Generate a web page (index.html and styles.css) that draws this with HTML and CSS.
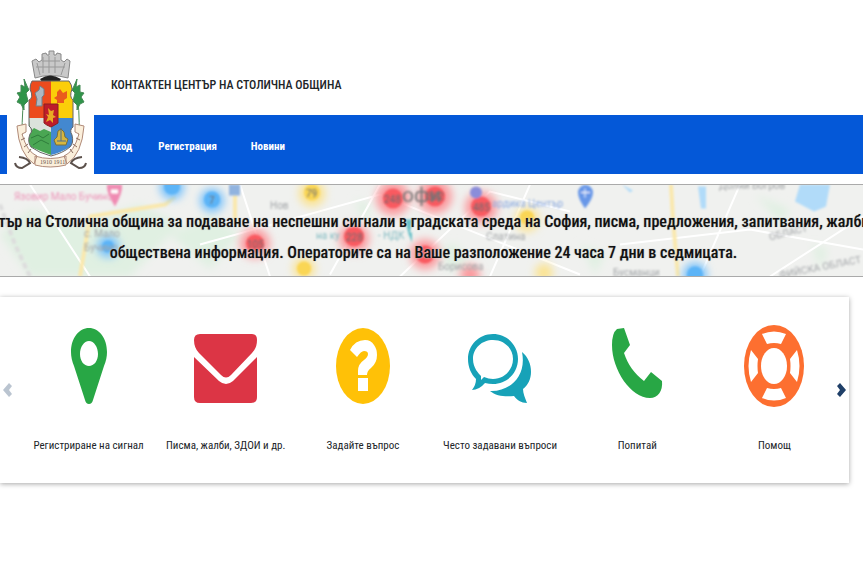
FILE: index.html
```
<!DOCTYPE html>
<html lang="bg">
<head>
  <meta charset="UTF-8">
  <meta name="viewport" content="width=device-width, initial-scale=1.0">
  <title>Контактен център на Столична община</title>
  <link rel="stylesheet" href="styles.css">
</head>
<body>
  <header class="header">
    <a class="logo" href="#" aria-label="Столична община">
      <svg viewBox="0 0 87 126" width="87" height="126">
        <!-- crown -->
        <path d="M25 13l4-2 3 3 3-2V6l4-1 1 2 2 0V3h5v4l2 0 1-2 4 1v6l3 2 3-3 3 2-2 17q-18-5-33 0z" fill="#c9c9c9" stroke="#888" stroke-width="1"/>
        <path d="M36 9v16M42 8v17M48 9v16M30 15l3 12M58 15l-4 12M29 19h29M35 13h18" stroke="#999" fill="none"/>
        <path d="M33 31q10-7 21 0l-2 3H35z" fill="#222"/>
        <!-- olive branches -->
        <path d="M18 41q-3 20-3 46M69 41q4 20 3 46" stroke="#4b8a56" stroke-width="1" fill="none"/>
        <path d="M17 31l3 7 2 4-3 3 2 8-4 4 0 5-3-6-4-2 3-5-3-4 4-1 0-7 4 2zM70 31l-3 7-2 4 3 3-2 8 4 4 0 5 3-6 4-2-3-5 3-4-4-1 0-7-4 2z" fill="#2f9449" stroke="#458a55"/>
        <!-- shield -->
        <path d="M25 33h19v37H22V52q5-2 1-11 0-5 2-8z" fill="#ec4b1e"/>
        <path d="M44 33h18q3 4 3 8-3 8 1 11v18H44z" fill="#fbce09"/>
        <path d="M22 70h22v37q-11-4-20-8-4-5-1-13 4-4-1-8z" fill="#4aa653"/>
        <path d="M44 70h22v9q-4 3-1 8 2 8-2 12-8 5-19 8z" fill="#4388d0"/>
        <path d="M22 70h22v14l-7-3-4 2-6-3-4 4z" fill="#dce2dc"/>
        <path d="M24 90l7-3 5 3 6-4M26 97l8-5 8 4" stroke="#2f7d3b" fill="none"/>
        <path d="M25 33h37q3 4 3 8-3 8 1 11v27q-4 3-1 8 2 8-2 12-7 6-19 9-12-3-20-9-4-5-1-13 4-4-1-8V52q5-2 1-11 0-5 2-8z" fill="none" stroke="#666"/>
        <path d="M33 38l4 3v6l-2 2v9h-6l1-7-2-6 4-3z" fill="#aeb9c2" stroke="#727f89"/>
        <path d="M53 41l3 4 4-2 0 7-3 2v3h-7v-3l-3-2 3-2v-4z" fill="#ea5a1c"/>
        <path d="M47 92l3-3 1-6 3-2 3 3 1 5 3 2-2 6H49z" fill="#d6b63f" stroke="#78703c"/>
        <path d="M50 93h9M54 80v13" stroke="#496c91"/>
        <path d="M37 56h14v19q-3 2-7 4-5-2-7-4z" fill="#be1c2b" stroke="#8c211f"/>
        <path d="M41 60l3 3 3-1-1 5 3 2-3 1v5l-3-3-4 2 2-5-2-3 3 1z" fill="#e8aa24"/>
        <!-- ribbon -->
        <path d="M10 78l9-2v8l-4 2q5 18 15 22l-3 8Q12 106 10 78zM77 78l-9-2v8l4 2q-5 18-15 22l3 8q15-10 17-38zM28 108q15 5 31 0v9q-16 4-31 0z" fill="#fbefdb" stroke="#b08a78"/>
        <path d="M14 92l4-2M17 99l4-3M21 105l3-4M73 92l-4-2M70 99l-4-3M66 105l-3-4" stroke="#8a6c60"/>
        <path d="M12 109q9 1 11 6l-8 5q-6 0-7-5M75 109q-9 1-11 6l8 5q6 0 7-5" fill="none" stroke="#5c514c" stroke-width="2"/>
        <text x="33" y="116" font-size="6" font-family="Liberation Serif, serif" fill="#68554b">1910 1911</text>
      </svg>
    </a>
    <h1 class="title">Контактен център на Столична община</h1>
    <nav class="nav">
      <a href="#">Вход</a>
      <a href="#">Регистрация</a>
      <a href="#">Новини</a>
    </nav>
  </header>

  <section class="banner">
    <svg class="map" viewBox="0 0 863 92" preserveAspectRatio="xMidYMid slice" aria-hidden="true">
      <defs>
        <filter id="soft"><feGaussianBlur stdDeviation="1"/></filter>
        <filter id="glow" x="-50%" y="-50%" width="200%" height="200%"><feGaussianBlur stdDeviation="4"/></filter>
      </defs>
      <rect width="863" height="92" fill="#f0f1ef"/>
      <g filter="url(#glow)" fill="#e0f0e2">
        <path d="M0 50l30-25 50 15 60-20 40 20-50 52H30zM170 50l40-20 30 20-30 35zM355 15l15 5-5 20zM440 65l15-6 15 20-20 8zM755 10l35 15-10 12zM812 60l16 5-8 20zM580 60l25 10-10 20z"/>
      </g>
      <g fill="none" stroke="#fff" stroke-width="2">
        <path d="M30 0l60 92M240 0l30 92M200 60l180-50 200 80M330 90l50-90M400 92l90-85 80 20M620 60l130-15 113 20M700 92l40-92M530 0l-40 92M770 92l93-60"/>
      </g>
      <path d="M0 20l15 40 15 32" fill="none" stroke="#ddd" stroke-width="4" stroke-dasharray="6 3" filter="url(#soft)"/>
      <g fill="none" stroke="#fae8ad" stroke-width="4" filter="url(#soft)">
        <path d="M80 92l10-60 75-12 10-8M235 10v30M671 0l2 35 5 57"/>
      </g>
      <g fill="#b1dbf9" filter="url(#soft)">
        <path d="M800 0h30l-4 22-12 5-19-10zM698 2h8v22h-5zM622 0l11 6-3 2z"/>
      </g>
      <g filter="url(#glow)">
        <g fill="#7cc3fb"><circle cx="172" cy="3" r="12"/><circle cx="212" cy="16" r="12"/><circle cx="108" cy="62" r="11"/><circle cx="695" cy="90" r="12"/></g>
        <g fill="#fb9a9e"><circle cx="255" cy="59" r="15"/><circle cx="393" cy="14" r="17"/><circle cx="435" cy="12" r="17"/><circle cx="481" cy="23" r="16"/><circle cx="354" cy="54" r="15"/><circle cx="425" cy="70" r="15"/><circle cx="470" cy="90" r="10"/></g>
        <g fill="#fbe391"><circle cx="312" cy="9" r="13"/><circle cx="304" cy="84" r="11"/><circle cx="527" cy="35" r="12"/><circle cx="544" cy="88" r="9"/></g>
      </g>
      <g filter="url(#soft)">
        <g fill="#5cb4f7"><circle cx="172" cy="2" r="8"/><circle cx="212" cy="15" r="8"/><circle cx="108" cy="62" r="6"/><circle cx="695" cy="90" r="8"/></g>
        <g fill="#f95a60"><circle cx="255" cy="59" r="9"/><circle cx="393" cy="14" r="10"/><circle cx="435" cy="12" r="10"/><circle cx="481" cy="22" r="10"/><circle cx="354" cy="52" r="10"/><circle cx="425" cy="70" r="9"/></g>
        <g fill="#fad654"><circle cx="312" cy="8" r="8"/><circle cx="304" cy="84" r="7"/><circle cx="527" cy="33" r="7"/></g>
        <path d="M107 0h15q1 8-7 22-9-14-8-22z" fill="#f08bb2"/><path d="M111 5h7v4h-7z" fill="#fff"/>
        <path d="M578 8a7 7 0 0 1 15 0q0 6-8 16-7-10-7-16z" fill="#6797e8"/><path d="M585 4v9M581 8h9" stroke="#fff"/>
        <path d="M229 0h11v11h-11z" fill="#91b3df"/><circle cx="476" cy="8" r="6" fill="#8b8dda"/>
        <path d="M405 35h8l-4 16zM408 48h4v10z" fill="#66bfc7"/>
      </g>
      <g class="map-labels" filter="url(#soft)">
        <text x="14" y="15" fill="#ed94b8">Язовир Мало Бучино</text>
        <text x="84" y="52">с. Мало</text><text x="84" y="66">Бучино</text>
        <text x="270" y="24">Нов</text>
        <text class="city" x="402" y="17">офи</text>
        <text x="492" y="22" fill="#8eace1">ардика Център</text>
        <text x="316" y="54" fill="#80bac1">на ку</text><text x="378" y="54" fill="#80bac1">- НДК</text>
        <text x="486" y="55">Слатина</text><text x="438" y="85">Борисова</text>
        <text x="719" y="4">Долни Богров</text>
        <text x="770" y="56" transform="rotate(-14 770 56)">ОБЛАСТ</text>
        <text x="613" y="91">Бусманци</text><text x="780" y="94" transform="rotate(-11 780 94)">ФИЙСКА ОБЛАСТ</text>
        <g fill="#6b6b70">
          <text x="306" y="12">79</text><text x="209" y="19">7</text><text x="384" y="18">248</text><text x="427" y="15">362</text><text x="473" y="26">485</text><text x="346" y="56">228</text><text x="247" y="63">105</text>
        </g>
      </g>
    </svg>
    <p class="banner-text">
      <span>център на Столична община за подаване на неспешни сигнали в градската среда на София, писма, предложения, запитвания, жалби,</span>
      <span>обществена информация. Операторите са на Ваше разположение 24 часа 7 дни в седмицата.</span>
    </p>
  </section>

  <main class="carousel">
    <button class="arrow prev" type="button" aria-label="Назад" disabled>
      <svg viewBox="0 0 10 16" width="10" height="16"><path d="M0 8l6-7 3 3-3 4 3 4-3 3z" fill="currentColor"/></svg>
    </button>
    <div class="items">
      <a class="item" href="#">
        <svg viewBox="0 0 60 84"><path fill="#28a745" fill-rule="evenodd" d="M30 4c10 0 18 10 18 24 0 5-1 9-3 14L34 76q-1 4-4 4t-4-4L15 42c-2-5-3-9-3-14C12 14 20 4 30 4zm0 13c-5 0-9 6-9 13s4 12 9 12 9-5 9-12-4-13-9-13z"/></svg>
        <span>Регистриране на сигнал</span>
      </a>
      <a class="item" href="#">
        <svg class="wide" viewBox="0 0 64 84"><path fill="#dc3545" d="M6 10h52q5 0 5 6 0 8-5 13L37 51q-5 5-10 0L5 29Q0 24 0 16q0-6 6-6zM0 33l25 24q7 6 14 0l24-24v40q0 6-6 6H6q-6 0-6-6z"/></svg>
        <span>Писма, жалби, ЗДОИ и др.</span>
      </a>
      <a class="item" href="#">
        <svg viewBox="0 0 60 84"><ellipse cx="30" cy="42" rx="27" ry="38" fill="#ffc107"/><path fill="#fff" d="M17 26q5-10 15-10 6 0 9 5 3 4 3 10 0 8-6 13-4 3-4 7H25v-4q0-7 6-11 4-3 4-6 0-3-4-3-3 0-7 6zM25 54h10v13H25z"/></svg>
        <span>Задайте въпрос</span>
      </a>
      <a class="item" href="#">
        <svg class="wide" viewBox="0 0 64 84"><g fill="#17a2b8"><path fill-rule="evenodd" d="M25 10c14 0 25 11 25 25S39 60 25 60q-4 0-8-1-6 7-13 7 4-5 4-11C3 50 0 43 0 35c0-14 11-25 25-25zm0 6C14 16 5 24 5 35c0 9 6 15 8 17v4l3-3c3 1 6 2 9 2 11 0 20-9 20-20s-9-19-20-19z"/><path d="M54 28c6 5 9 12 9 20 0 7-3 13-8 17 0 4 2 9 4 14-6 0-10-3-13-7-9 1-18 0-24-5 19 1 37-14 32-39z"/></g></svg>
        <span>Често задавани въпроси</span>
      </a>
      <a class="item" href="#">
        <svg viewBox="0 0 60 84"><path fill="#28a745" d="M10 5l7-1 6 17-6 8c4 12 10 20 20 28l7-9 11 9c1 10-4 17-12 17C24 74 5 46 5 21Q5 9 10 5z"/></svg>
        <span>Попитай</span>
      </a>
      <a class="item" href="#">
        <svg viewBox="0 0 60 84"><ellipse cx="30" cy="42" rx="30" ry="41" fill="#fd6f30"/><ellipse cx="30" cy="42" rx="13" ry="18" fill="#fff"/><path fill="#fff" d="M18 10q12-5 24 0l-5 10q-7-2-14 0zM18 74q12 5 24 0l-5-10q-7 2-14 0zM7 26q-5 16 0 32l7-9q-1-7 0-14zM53 26q5 16 0 32l-7-9q1-7 0-14z"/></svg>
        <span>Помощ</span>
      </a>
    </div>
    <button class="arrow next" type="button" aria-label="Напред">
      <svg viewBox="0 0 10 16" width="10" height="16"><path d="M10 8L4 1 1 4l3 4-3 4 3 3z" fill="currentColor"/></svg>
    </button>
  </main>
</body>
</html>
```
FILE: styles.css
```
* {
  box-sizing: border-box;
}
body {
  margin: 0;
  padding-bottom: 40px;
  background: #fff;
  color: #212529;
  font-family: "Roboto Condensed", Roboto, sans-serif;
}

a {
  color: inherit;
  text-decoration: none;
}

/* header */
.header {
  position: relative;
  padding-top: 74px;
}
.logo {
  position: absolute;
  left: 7px;
  top: 48px;
  background: #fff;
}
.logo svg {
  display: block;
}
.title {
  margin: 0 0 19px 111px;
  font-size: 12px;
  line-height: 22px;
  font-weight: 500;
  text-transform: uppercase;
}
.nav {
  display: flex;
  align-items: center;
  gap: 26px;
  height: 59px;
  padding: 3px 0 0 110px;
  background: #0458d8;
  color: #fff;
  font-size: 11px;
  font-weight: bold;
}
.nav a:last-child {
  margin-left: 8px;
}

/* banner */
.banner {
  position: relative;
  margin-top: 10px;
  padding: 21px 0 8px;
  border: solid #aaa;
  border-width: 1px 0;
  overflow: hidden;
}
.map {
  position: absolute;
  left: 0;
  top: 0;
  width: 100%;
  height: 100%;
}
.map-labels {
  font-family: Roboto, sans-serif;
  font-size: 10px;
  fill: #a3a6a9;
}
.map-labels .city {
  font-size: 21px;
  fill: #777;
}
.banner-text {
  position: relative;
  display: flex;
  flex-direction: column;
  align-items: center;
  margin: 0;
  padding-right: 16px;
  color: #111;
  font-size: 16px;
  font-weight: 500;
  line-height: 31px;
  white-space: nowrap;
  text-shadow: 0 0 2px #fff, 0 0 1px #333;
}

/* carousel */
.carousel {
  position: relative;
  margin: 20px 14px 0 0;
  padding: 27px 6px 27px 20px;
  background: #fff;
  box-shadow: 0 1px 5px rgba(0, 0, 0, 0.35);
}
.items {
  display: grid;
  grid-template-columns: repeat(6, minmax(0, 1fr));
}
.item {
  display: flex;
  flex-direction: column;
  align-items: center;
  gap: 28px;
  font-size: 11px;
  line-height: 20px;
  white-space: nowrap;
}
.item svg {
  width: 60px;
  height: 84px;
}
.item .wide {
  width: 64px;
}
.arrow {
  position: absolute;
  top: 85px;
  padding: 0;
  border: 0;
  background: none;
  color: #1f3f68;
  line-height: 0;
}
.prev {
  left: 3px;
  opacity: 0.3;
}
.next {
  right: 3px;
}
```
